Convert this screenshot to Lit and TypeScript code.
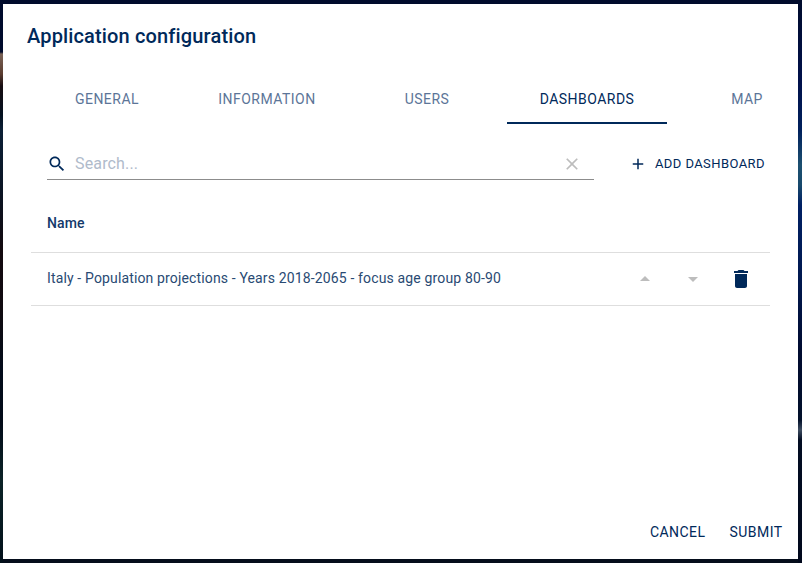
import { LitElement, html, css, svg } from "lit";
import { customElement, state } from "lit/decorators.js";
import { classMap } from "lit/directives/class-map.js";

const ICONS = {
  search: "M15.5 14h-.79l-.28-.27C15.41 12.59 16 11.11 16 9.5 16 5.91 13.09 3 9.5 3S3 5.91 3 9.5 5.91 16 9.5 16c1.61 0 3.09-.59 4.23-1.57l.27.28v.79l5 4.99L20.49 19l-4.99-5zm-6 0C7.01 14 5 11.99 5 9.5S7.01 5 9.5 5 14 7.01 14 9.5 11.99 14 9.5 14z",
  clear: "M19 6.41L17.59 5 12 10.59 6.41 5 5 6.41 10.59 12 5 17.59 6.41 19 12 13.41 17.59 19 19 17.59 13.41 12z",
  add: "M19 13h-6v6h-2v-6H5v-2h6V5h2v6h6v2z",
  up: "M7 14l5-5 5 5z",
  down: "M7 10l5 5 5-5z",
  trash: "M6 19c0 1.1.9 2 2 2h8c1.1 0 2-.9 2-2V7H6v12zM19 4h-3.500l-1-1h-5l-1 1H5v2h14V4z",
};

const icon = (name: keyof typeof ICONS) =>
  html`<svg class="icon ${name}-icon" viewBox="0 0 24 24" aria-hidden="true">${svg`<path d=${ICONS[name]}></path>`}</svg>`;

@customElement("app-root")
export class AppRoot extends LitElement {
  @state() private active = "Dashboards";

  private tabs = ["General", "Information", "Users", "Dashboards", "Map"];
  private rows = ["Italy - Population projections - Years 2018-2065 - focus age group 80-90"];

  static styles = css`
    :host {
      display: block;
      box-sizing: border-box;
      height: 100vh;
      padding: 4px 4px 4px 3px;
      font-family: Roboto, sans-serif;
      color: #00295a;
      background:
        linear-gradient(180deg, #000b2c 0, #000b2c 52px, #7a6357 54px, #5a3c30 74px, #170d12 86px, #03101f 115px, #0c2036 130px, #0a1424 190px, #12090f 250px, #100a10 310px, #020b1a 370px, #020a18 420px, #0b2327 480px, #02101a 563px) left / 3px 100% no-repeat,
        linear-gradient(180deg, #000b2c 0, #00104a 80px, #00205c 130px, #1c4f70 165px, #17496c 185px, #002064 205px, #00184f 280px, #000b30 350px, #02102a 420px, #3d4c60 430px, #020c22 440px, #01081c 563px) right / 4px 100% no-repeat,
        linear-gradient(180deg, #000b2c 50%, #050d1b 50%);
    }
    * { box-sizing: border-box; }
    button {
      font: 400 14px/24px Roboto, sans-serif;
      color: inherit;
      border: 0;
      padding: 0;
      background: none;
      text-transform: uppercase;
      white-space: nowrap;
    }
    .dialog {
      height: 100%;
      display: flex;
      flex-direction: column;
      background: #fff;
    }
    h2 {
      margin: 0;
      padding: 16px 24px;
      font: 500 20px/32px Roboto, sans-serif;
      letter-spacing: 0.15px;
    }
    .content { flex: 1; min-height: 0; padding: 8px 24px; }
    .tabs { display: flex; overflow: hidden; height: 48px; }
    .tab {
      flex: 0 0 160px;
      height: 48px;
      letter-spacing: 0.47px;
      color: #5c7598;
      border-bottom: 2px solid transparent;
    }
    .tab.active { color: #00295a; border-bottom-color: #00295a; }
    .panel { padding: 16px 4px 0; }
    .toolbar {
      display: flex;
      align-items: stretch;
      justify-content: space-between;
      height: 40px;
      padding: 0 5px 0 16px;
    }
    .search {
      width: 547px;
      display: flex;
      align-items: center;
      padding-top: 8px;
      border-bottom: 1px solid #8c8c8c;
    }
    .icon { display: block; fill: currentColor; width: 24px; height: 24px; }
    .search-icon { width: 20px; height: 20px; }
    input {
      flex: 1;
      min-width: 0;
      height: 30px;
      margin-left: 8px;
      padding: 0;
      border: 0;
      outline: 0;
      background: none;
      font: 400 16px/20px Roboto, sans-serif;
      letter-spacing: 0.15px;
      color: #00295a;
    }
    input::placeholder { color: #b0bbcb; opacity: 1; }
    .clear-icon { width: 20px; height: 20px; color: #bdbdbd; margin-right: 12px; }
    .add-button {
      display: flex;
      align-items: center;
      padding-top: 8px;
      font-size: 13px;
      letter-spacing: 0.42px;
    }
    .add-icon { width: 18px; height: 18px; margin-right: 8px; }
    .head {
      height: 59px;
      padding: 0 16px;
      margin-top: 14px;
      border-bottom: 1px solid #dedede;
      font: 500 14px/58px Roboto, sans-serif;
      letter-spacing: 0.15px;
      color: #14396a;
    }
    .row {
      display: flex;
      align-items: center;
      height: 53px;
      padding: 0 17px 0 16px;
      border-bottom: 1px solid #dedede;
      font: 400 14px/20px Roboto, sans-serif;
      letter-spacing: 0.145px;
      color: #294a73;
    }
    .name { flex: 1; white-space: nowrap; padding-bottom: 2px; }
    .actions { display: flex; gap: 24px; }
    .up-icon, .down-icon { color: #bdbdbd; }
    .trash-icon { color: #00295a; }
    .footer {
      display: flex;
      justify-content: flex-end;
      gap: 24px;
      padding: 0 15.500px 15px;
    }
    .footer button { letter-spacing: 0.45px; }
  `;

  render() {
    return html`
      <div class="dialog" role="dialog">
        <h2>Application configuration</h2>
        <div class="content">
          <div class="tabs" role="tablist">
            ${this.tabs.map(
              (t) => html`<button
                role="tab"
                class=${classMap({ tab: true, active: t === this.active })}
                @click=${() => (this.active = t)}
              >${t}</button>`
            )}
          </div>
          <div class="panel">
            <div class="toolbar">
              <div class="search">${icon("search")}<input placeholder="Search..." />${icon("clear")}</div>
              <button class="add-button">${icon("add")}Add dashboard</button>
            </div>
            <div class="head">Name</div>
            ${this.rows.map(
              (r) => html`<div class="row">
                <span class="name">${r}</span>
                <div class="actions">${icon("up")}${icon("down")}${icon("trash")}</div>
              </div>`
            )}
          </div>
        </div>
        <div class="footer"><button>Cancel</button><button>Submit</button></div>
      </div>
    `;
  }
}
